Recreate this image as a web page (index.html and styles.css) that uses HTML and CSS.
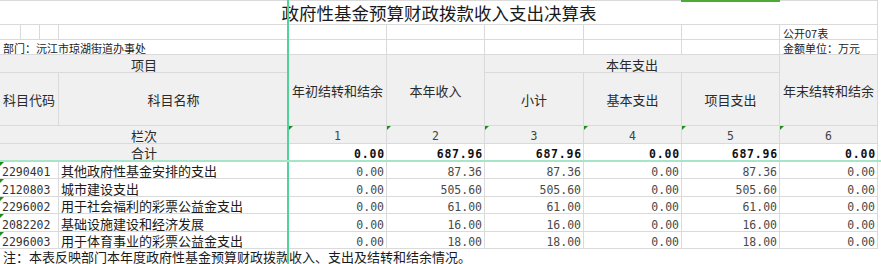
FILE: index.html
```html
<!DOCTYPE html>
<html lang="zh-CN">
<head>
<meta charset="utf-8">
<title>政府性基金预算财政拨款收入支出决算表</title>
<link rel="stylesheet" href="styles.css">
</head>
<body>
<div class="sheet">
  <div class="grid">
    <div class="c title s10">政府性基金预算财政拨款收入支出决算表</div>

    <div class="c"></div><div class="c"></div><div class="c"></div><div class="c"></div><div class="c"></div>
    <div class="c"></div><div class="c"></div><div class="c"></div><div class="c"></div>
    <div class="c meta">公开07表</div>

    <div class="c meta s4">部门：沅江市琼湖街道办事处</div>
    <div class="c"></div><div class="c"></div><div class="c"></div><div class="c"></div><div class="c"></div>
    <div class="c meta">金额单位：万元</div>

    <div class="c h hb s4">项目</div>
    <div class="c h r2">年初结转和结余</div>
    <div class="c h r2">本年收入</div>
    <div class="c h hb s3">本年支出</div>
    <div class="c h r2">年末结转和结余</div>
    <div class="c h s3">科目代码</div>
    <div class="c h">科目名称</div>
    <div class="c h">小计</div>
    <div class="c h">基本支出</div>
    <div class="c h">项目支出</div>

    <div class="c h hb s4">栏次</div>
    <div class="c h hb idx tri">1</div>
    <div class="c h hb idx tri">2</div>
    <div class="c h hb idx tri">3</div>
    <div class="c h hb idx tri">4</div>
    <div class="c h hb idx tri">5</div>
    <div class="c h hb idx tri">6</div>

    <div class="c h hb s4 sum">合计</div>
    <div class="c n b sum">0.00</div>
    <div class="c n b sum">687.96</div>
    <div class="c n b sum">687.96</div>
    <div class="c n b sum">0.00</div>
    <div class="c n b sum">687.96</div>
    <div class="c n b sum">0.00</div>

    <div class="c code s3 tri">2290401</div>
    <div class="c name">其他政府性基金安排的支出</div>
    <div class="c n">0.00</div><div class="c n">87.36</div><div class="c n">87.36</div>
    <div class="c n">0.00</div><div class="c n">87.36</div><div class="c n">0.00</div>

    <div class="c code s3 tri">2120803</div>
    <div class="c name">城市建设支出</div>
    <div class="c n">0.00</div><div class="c n">505.60</div><div class="c n">505.60</div>
    <div class="c n">0.00</div><div class="c n">505.60</div><div class="c n">0.00</div>

    <div class="c code s3 tri">2296002</div>
    <div class="c name">用于社会福利的彩票公益金支出</div>
    <div class="c n">0.00</div><div class="c n">61.00</div><div class="c n">61.00</div>
    <div class="c n">0.00</div><div class="c n">61.00</div><div class="c n">0.00</div>

    <div class="c code s3 tri">2082202</div>
    <div class="c name">基础设施建设和经济发展</div>
    <div class="c n">0.00</div><div class="c n">16.00</div><div class="c n">16.00</div>
    <div class="c n">0.00</div><div class="c n">16.00</div><div class="c n">0.00</div>

    <div class="c code s3 tri">2296003</div>
    <div class="c name">用于体育事业的彩票公益金支出</div>
    <div class="c n">0.00</div><div class="c n">18.00</div><div class="c n">18.00</div>
    <div class="c n">0.00</div><div class="c n">18.00</div><div class="c n">0.00</div>

    <div class="c foot s10">注：本表反映部门本年度政府性基金预算财政拨款收入、支出及结转和结余情况。</div>
  </div>
  <div class="freeze-v"></div>
  <div class="freeze-h"></div>
  <div class="col-sel"></div>
</div>
</body>
</html>
```

FILE: styles.css
```css
html, body {
  margin: 0;
  padding: 0;
  background: #ffffff;
}

body {
  font-family: "Noto Sans CJK SC", "Noto Sans", sans-serif;
  width: 881px;
  height: 264px;
  overflow: hidden;
}

.sheet {
  position: relative;
  width: 881px;
  height: 264px;
}

.grid {
  display: grid;
  width: 878px;
  grid-template-columns: 21px 19px 19px 230px 98px 98px 99px 98px 98px 98px;
  grid-template-rows: 24px 15px 15px 18px 53px 18px 18px 17px 18px 17px 18px 17px 15px;
  border-top: 1px solid #dadada;
}

.c {
  position: relative;
  display: flex;
  align-items: flex-end;
  min-width: 0;
  overflow: hidden;
  white-space: nowrap;
  border-right: 1px solid #dadada;
  border-bottom: 1px solid #dadada;
  font-size: 13px;
  line-height: 15px;
  color: #222222;
}

.s3 { grid-column: span 3; }
.s4 { grid-column: span 4; }
.s10 { grid-column: span 10; }
.r2 { grid-row: span 2; }

.title {
  justify-content: center;
  align-items: center;
  font-size: 17.5px;
  line-height: 22px;
  color: #1a1a1a;
  padding-left: 1px;
}

.meta {
  font-size: 11px;
  line-height: 12px;
  padding-left: 3px;
  color: #222222;
}

.h {
  background: #f0f0f0;
  justify-content: center;
  align-items: center;
  color: #2a2a2a;
}

.hb {
  align-items: flex-end;
}

.idx {
  font-family: "DejaVu Sans Mono", "Liberation Mono", monospace;
  font-size: 11.5px;
  line-height: 12px;
  padding-bottom: 1px;
  color: #444444;
}

.sum {
  padding-bottom: 1px;
}

.n {
  justify-content: flex-end;
  padding-right: 2px;
  font-family: "DejaVu Sans Mono", "Liberation Mono", monospace;
  font-size: 11.5px;
  line-height: 11px;
  color: #4a4a4a;
}

.n.b {
  font-weight: bold;
  letter-spacing: 0.8px;
  padding-right: 1px;
  color: #111111;
}

.code {
  padding-left: 2px;
  font-family: "DejaVu Sans Mono", "Liberation Mono", monospace;
  font-size: 11.5px;
  line-height: 11px;
  color: #333333;
}

.name {
  padding-left: 2px;
  color: #1a1a1a;
}

.foot {
  border: none;
  align-items: flex-start;
  overflow: visible;
  padding-left: 3px;
  padding-top: 1px;
  line-height: 14px;
  color: #1a1a1a;
}

.tri::before {
  content: "";
  position: absolute;
  top: 0;
  left: 0;
  width: 0;
  height: 0;
  border-top: 4px solid #1e8c1e;
  border-right: 4px solid transparent;
}

.freeze-v {
  position: absolute;
  left: 287px;
  top: 0;
  width: 2px;
  height: 264px;
  background: #4fd39b;
}

.freeze-h {
  position: absolute;
  left: 0;
  top: 160px;
  width: 881px;
  height: 2px;
  background: #a6e5c7;
}

.col-sel {
  position: absolute;
  left: 681px;
  top: 0;
  width: 99px;
  height: 2px;
  background: #4caa35;
}
```
